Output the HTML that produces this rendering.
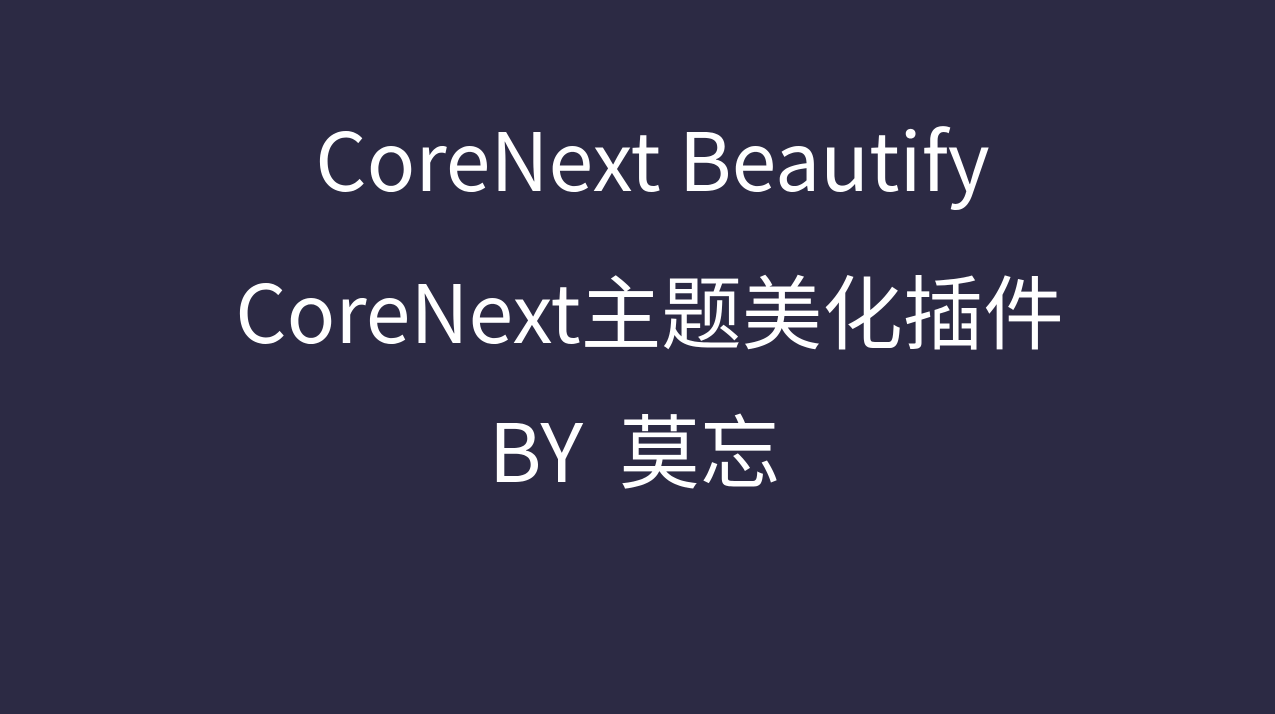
<!DOCTYPE html>
<html><head><meta charset="utf-8"><style>
html,body{margin:0;padding:0;}
body{width:1275px;height:714px;background:#2c2a44;overflow:hidden;position:relative;font-family:"Noto Sans CJK SC","Liberation Sans",sans-serif;color:#fff;}
.t{position:absolute;left:0;width:1275px;text-align:center;font-size:80.5px;line-height:1;white-space:nowrap;}
</style></head><body>
<div class="t" style="top:117px;left:15px;">CoreNext Beautify</div>
<div class="t" style="top:269px;left:12px;">CoreNext主题美化插件</div>
<div class="t" style="top:408px;left:-3px;">BY&nbsp;&nbsp;莫忘</div>
</body></html>
